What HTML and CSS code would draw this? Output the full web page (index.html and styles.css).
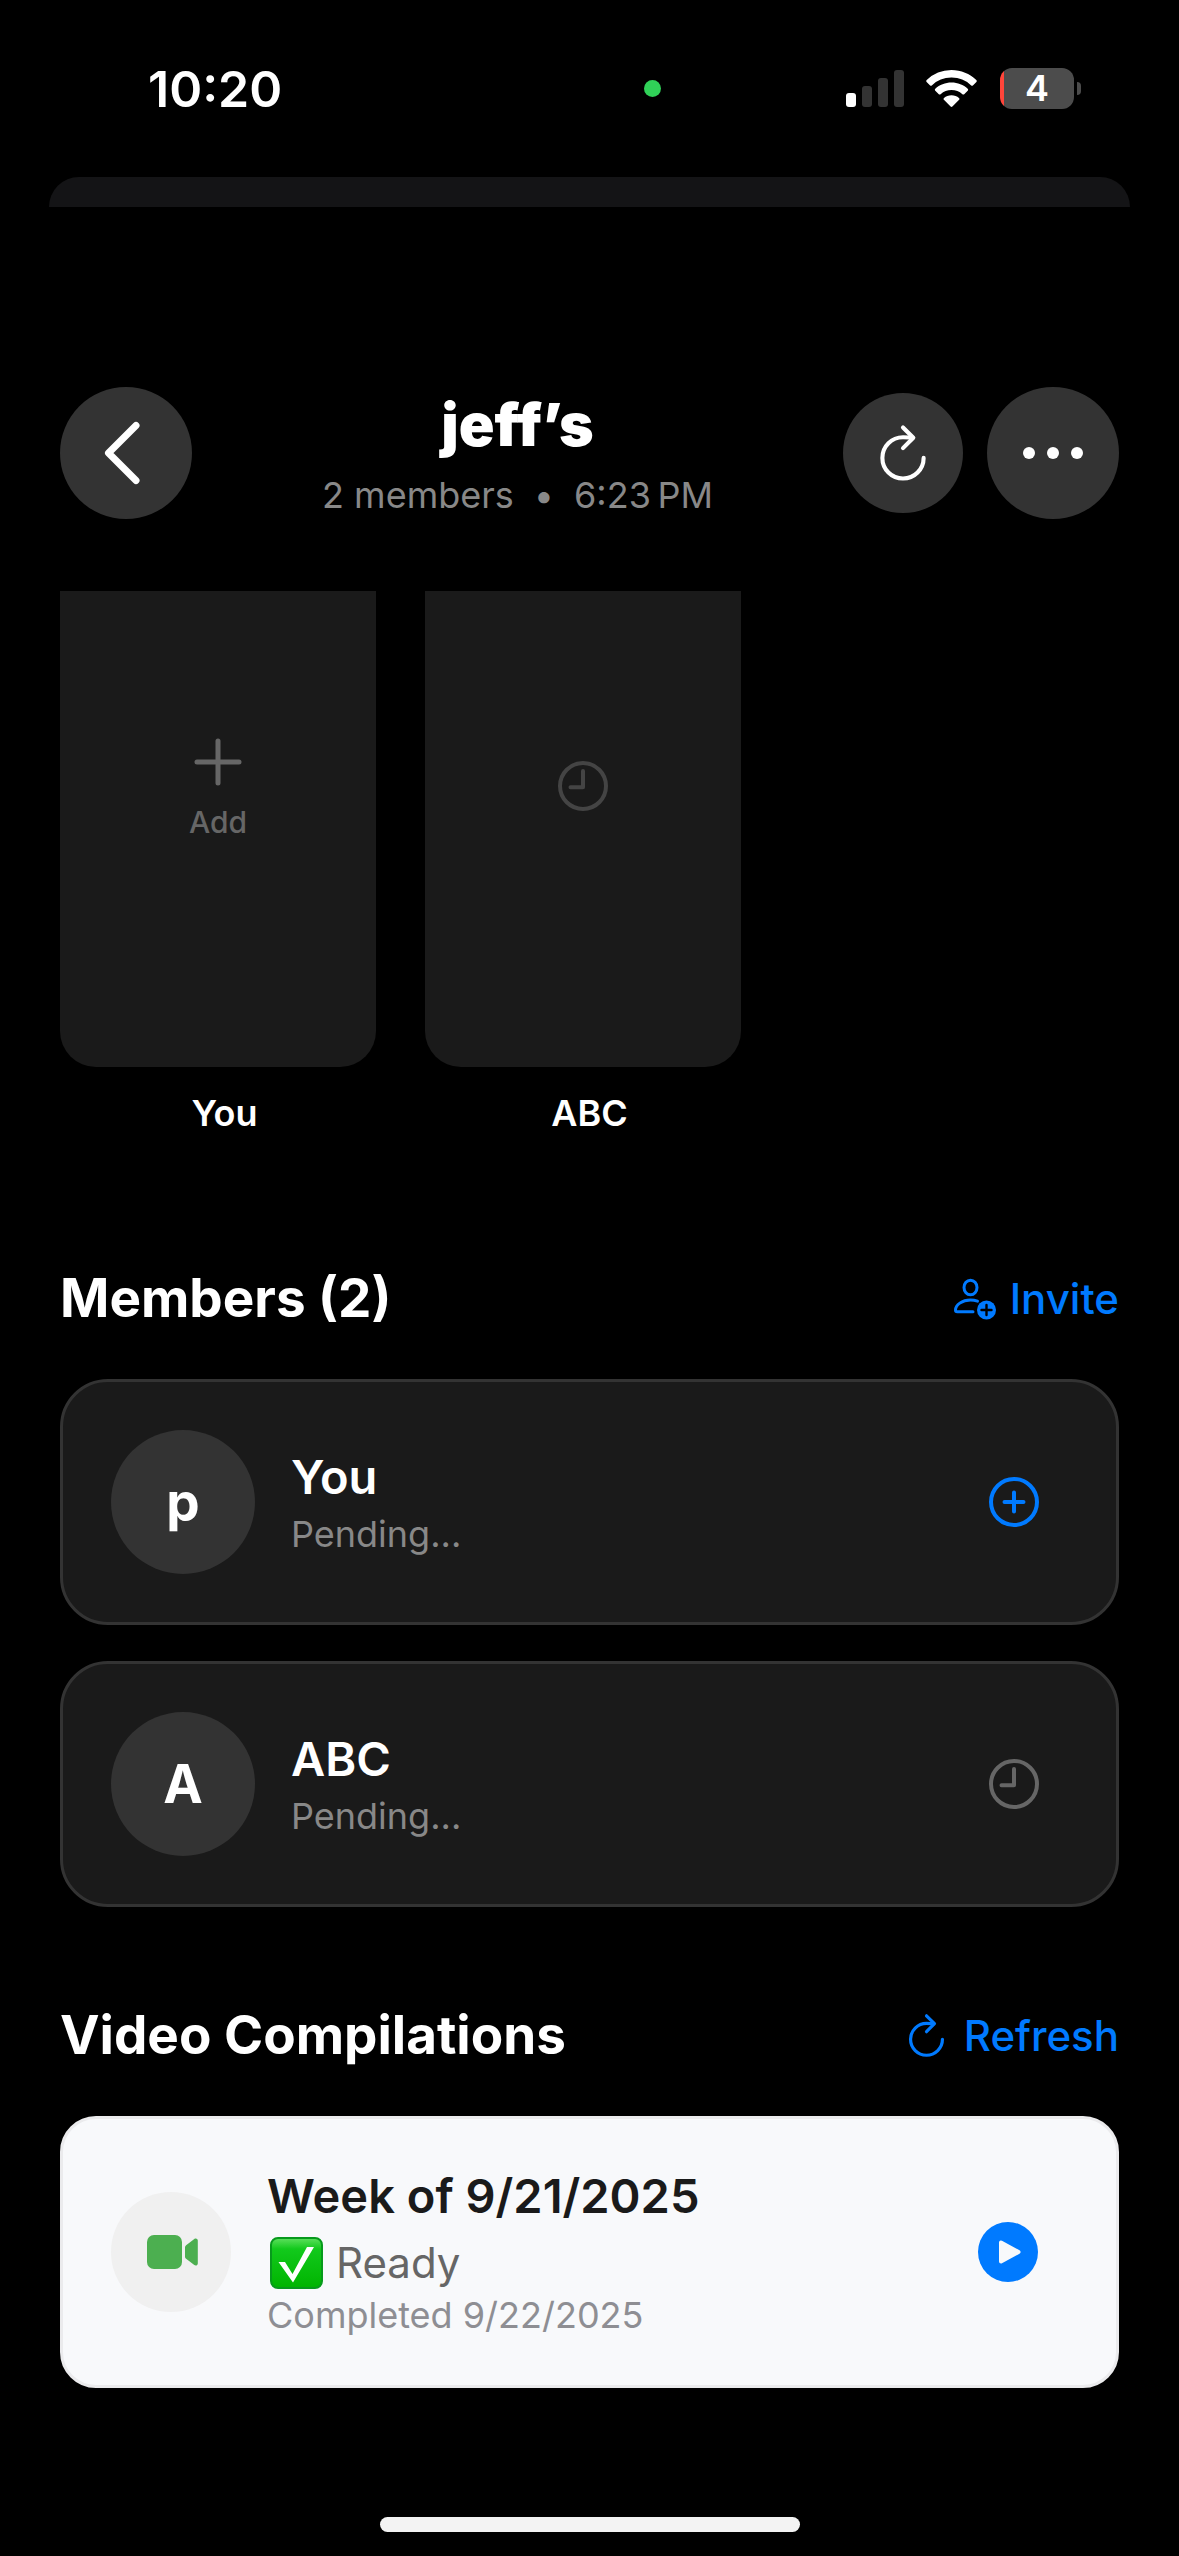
FILE: index.html
```html
<!DOCTYPE html>
<html lang="en">
<head>
<meta charset="utf-8">
<meta name="viewport" content="width=device-width, initial-scale=1">
<title>jeff’s</title>
<link rel="stylesheet" href="styles.css">
</head>
<body>
<svg class="sprite" aria-hidden="true">
  <symbol id="refresh" viewBox="0 0 512 512">
    <path d="M320 146s24.360-12-64-12a160 160 0 1 0 160 160" fill="none" stroke="currentColor" stroke-width="32" stroke-linecap="round"/>
    <path d="M256 58l80 80-80 80" fill="none" stroke="currentColor" stroke-width="32" stroke-linecap="round" stroke-linejoin="round"/>
  </symbol>
  <symbol id="clock" viewBox="0 0 60 60">
    <g fill="none" stroke="currentColor" stroke-width="4" stroke-linecap="round" stroke-linejoin="round">
      <circle cx="30" cy="30" r="23"/>
      <path d="M30 15v16.300H17.500"/>
    </g>
  </symbol>
</svg>

<div class="screen">
  <div class="status">
    <time class="clock">10:20</time>
    <span class="camera-dot"></span>
    <svg class="signal" viewBox="0 0 58 37" aria-label="Signal">
      <rect x="0" y="23" width="10" height="14" rx="3" fill="#fff"/>
      <rect x="16" y="16" width="10" height="21" rx="3" fill="#333"/>
      <rect x="32" y="8" width="10" height="29" rx="3" fill="#333"/>
      <rect x="48" y="0" width="10" height="37" rx="3" fill="#333"/>
    </svg>
    <svg class="wifi" viewBox="0 0 51 37" aria-label="Wi-Fi">
      <path fill="#fff" d="M25.500 0C35 0 43.800 3.700 50.300 10c.6.600.6 1.300.1 1.900l-3.500 3.500c-.5.500-1.200.5-1.700 0A28.300 28.300 0 0 0 25.500 7.600 28.300 28.300 0 0 0 5.800 15.400c-.5.500-1.200.5-1.700 0L.6 11.900c-.5-.6-.5-1.300.1-1.900A35.600 35.600 0 0 1 25.500 0z"/>
      <path fill="#fff" d="M25.500 12.600c6.200 0 11.900 2.300 16.200 6.200.6.600.6 1.300 0 1.900l-3.500 3.500c-.5.500-1.200.5-1.800.1a16.200 16.200 0 0 0-21.800 0c-.6.400-1.300.4-1.800-.1l-3.500-3.500c-.6-.6-.6-1.300 0-1.900 4.300-3.900 10-6.200 16.200-6.200z"/>
      <path fill="#fff" d="M25.500 25.200c2.900 0 5.500 1 7.500 2.700.6.500.6 1.300.1 1.800l-6.700 6.800c-.5.500-1.300.5-1.800 0l-6.700-6.800c-.5-.5-.5-1.300.1-1.800 2-1.700 4.600-2.700 7.500-2.700z"/>
    </svg>
    <span class="battery">4</span>
    <span class="battery-tip"></span>
  </div>

  <div class="sheet-edge"></div>

  <header class="header">
    <button class="round large" aria-label="Back">
      <svg class="icon-large" viewBox="0 0 72 72"><path d="M46 8.500L18.500 36 46 63.500" fill="none" stroke="#fff" stroke-width="7" stroke-linecap="round" stroke-linejoin="round"/></svg>
    </button>
    <div class="heading">
      <h1 class="title">jeff’s</h1>
      <p class="subtitle"><span>2 members</span><span>•</span><span>6:23&#8239;PM</span></p>
    </div>
    <button class="round" aria-label="Refresh"><svg class="icon-refresh"><use href="#refresh"/></svg></button>
    <button class="round large" aria-label="More">
      <svg class="icon-large" viewBox="0 0 72 72" fill="#fff"><circle cx="12" cy="36" r="6"/><circle cx="36" cy="36" r="6"/><circle cx="60" cy="36" r="6"/></svg>
    </button>
  </header>

  <main class="content">
    <div class="stories">
      <div class="story">
        <button class="story-card add">
          <svg class="icon" viewBox="0 0 60 60"><path d="M30 9v42M9 30h42" fill="none" stroke="currentColor" stroke-width="5" stroke-linecap="round"/></svg>
          <span>Add</span>
        </button>
        <span class="story-name">You</span>
      </div>
      <div class="story">
        <div class="story-card waiting"><svg class="icon"><use href="#clock"/></svg></div>
        <span class="story-name">ABC</span>
      </div>
    </div>

    <section class="section">
      <div class="section-head">
        <h2 class="section-title">Members (2)</h2>
        <button class="link">
          <svg class="icon-invite" viewBox="0 0 48 48">
            <g fill="none" stroke="currentColor" stroke-width="3" stroke-linecap="round">
              <ellipse cx="20.500" cy="12.500" rx="6.500" ry="7.300"/>
              <path d="M27.500 26.200C25.300 25.400 23 25 20.500 25 12 25 5.500 30 5.500 35c0 1.300.5 1.800 1.800 1.800H23"/>
            </g>
            <circle cx="36.500" cy="35" r="9.500" fill="currentColor"/>
            <path d="M36.500 30v10M31.500 35h10" stroke="#000" stroke-width="2.400" stroke-linecap="round"/>
          </svg>
          Invite
        </button>
      </div>
      <div class="cards">
        <article class="card">
          <span class="avatar">p</span>
          <div class="card-text">
            <h3 class="name">You</h3>
            <p class="note">Pending...</p>
          </div>
          <button class="action" aria-label="Add yours">
            <svg class="icon" viewBox="0 0 60 60"><g fill="none" stroke="currentColor" stroke-width="4" stroke-linecap="round"><circle cx="30" cy="30" r="23"/><path d="M30 20.500v19M20.500 30h19"/></g></svg>
          </button>
        </article>
        <article class="card">
          <span class="avatar">A</span>
          <div class="card-text">
            <h3 class="name">ABC</h3>
            <p class="note">Pending...</p>
          </div>
          <span class="action muted"><svg class="icon"><use href="#clock"/></svg></span>
        </article>
      </div>
    </section>

    <section class="section">
      <div class="section-head">
        <h2 class="section-title">Video Compilations</h2>
        <button class="link"><svg class="icon-reload"><use href="#refresh"/></svg>Refresh</button>
      </div>
      <article class="card light">
        <span class="avatar video">
          <svg class="icon" viewBox="0 0 60 60" fill="#4caf50">
            <rect x="6" y="13" width="35" height="34" rx="7"/>
            <path d="M44 25.300c0-.9.400-1.600 1.100-2.100l8.200-6.300c1.500-1.100 3.500-.2 3.500 1.600v23c0 1.800-2 2.700-3.500 1.600l-8.200-6.300c-.7-.5-1.100-1.200-1.100-2.100z"/>
          </svg>
        </span>
        <div class="card-text">
          <h3 class="name">Week of 9/21/2025</h3>
          <p class="ready">
            <svg class="check" viewBox="0 0 57 52" role="img" aria-label="Done">
              <defs><linearGradient id="green" x1="0" y1="0" x2="0" y2="1"><stop offset="0" stop-color="#5fe05f"/><stop offset=".22" stop-color="#12c91c"/><stop offset="1" stop-color="#00b400"/></linearGradient></defs>
              <rect x="4" y="1" width="51" height="50" rx="7" fill="url(#green)" stroke="#079a1c" stroke-width="2"/>
              <path d="M11.500 25h6.500l7.500 12L40 10h7L26 45.500z" fill="#fff"/>
            </svg>
            Ready
          </p>
          <p class="note">Completed 9/22/2025</p>
        </div>
        <button class="action" aria-label="Play">
          <svg class="icon-large" viewBox="0 0 72 72"><circle cx="36" cy="36" r="30" fill="#007aff"/><path d="M29 26.500v19l17.500-9.500z" fill="#f8f9fb" stroke="#f8f9fb" stroke-width="4" stroke-linejoin="round"/></svg>
        </button>
      </article>
    </section>
  </main>

  <div class="home-bar"></div>
</div>
</body>
</html>
```

FILE: styles.css
```css
* { box-sizing: border-box; margin: 0; padding: 0; }

body {
  background: #000;
  color: #fff;
  font-family: Inter, "Liberation Sans", sans-serif;
  font-size: 36px;
  line-height: 44px;
}

button {
  border: 0;
  background: none;
  color: inherit;
  font: inherit;
  cursor: pointer;
}

svg { display: block; flex: none; }
.sprite { position: absolute; width: 0; height: 0; }
.icon { width: 60px; height: 60px; }
.icon-large { width: 72px; height: 72px; }
.icon-refresh { width: 66px; height: 66px; }
.icon-reload { width: 51px; height: 51px; }
.icon-invite { width: 48px; height: 48px; }

.screen {
  display: flex;
  flex-direction: column;
  min-height: 100vh;
}

/* Status bar */
.status {
  display: flex;
  align-items: center;
  height: 177px;
  padding: 0 98px 0 148px;
}
.clock { font-size: 50px; font-weight: 600; }
.camera-dot {
  width: 17px;
  height: 17px;
  margin: 0 185px 0 auto;
  border-radius: 50%;
  background: #30d158;
}
.signal { width: 58px; height: 37px; }
.wifi { width: 51px; height: 37px; margin: 0 23px 0 22px; }
.battery {
  width: 74px;
  height: 41px;
  border-radius: 12px;
  background: linear-gradient(90deg, #ff453a 4px, #4c4c4c 4px);
  font-weight: 600;
  line-height: 41px;
  text-align: center;
}
.battery-tip {
  width: 4px;
  height: 13px;
  margin-left: 3px;
  border-radius: 0 4px 4px 0;
  background: #4c4c4c;
}

.sheet-edge {
  height: 30px;
  margin: 0 49px;
  border-radius: 30px 30px 0 0;
  background: #141416;
}

/* Header */
.header {
  display: flex;
  align-items: center;
  gap: 24px;
  padding: 180px 60px 72px;
}
.round {
  display: grid;
  place-items: center;
  flex: none;
  width: 120px;
  height: 120px;
  border-radius: 50%;
  background: #333;
}
.round.large { width: 132px; height: 132px; }
.heading {
  display: flex;
  flex: 1;
  flex-direction: column;
  align-items: center;
  gap: 12px;
}
.title { font-size: 59px; font-weight: 900; line-height: 72px; }
.subtitle { display: flex; gap: 20px; color: #888; }

.content { overflow: hidden; padding: 0 60px; }
.stories {
  display: grid;
  grid-template-columns: repeat(3, 1fr);
  gap: 36px;
  margin-top: -86px;
  padding-bottom: 35px;
}
.story { display: flex; flex-direction: column; gap: 24px; }
.story-card {
  display: flex;
  flex-direction: column;
  align-items: center;
  justify-content: center;
  gap: 12px;
  width: 316px;
  height: 562px;
  border-radius: 36px;
  background: #1a1a1a;
}
.add { color: #666; font-size: 30px; line-height: 36px; font-weight: 500; }
.waiting { color: #444; }
.story-name { font-weight: 600; text-align: center; }

/* Sections */
.section { padding-top: 96px; }
.section-head {
  display: flex;
  align-items: center;
  justify-content: space-between;
  height: 65px;
  margin-bottom: 48px;
}
.section-title { font-size: 53px; font-weight: 700; line-height: 65px; }
.link {
  display: flex;
  align-items: center;
  gap: 12px;
  color: #007aff;
  font-size: 42px;
  font-weight: 500;
  line-height: 52px;
}
.cards { display: flex; flex-direction: column; gap: 36px; }
.card {
  display: flex;
  align-items: center;
  gap: 36px;
  padding: 48px;
  border: 3px solid #333;
  border-radius: 48px;
  background: #1a1a1a;
}
.avatar {
  display: grid;
  place-items: center;
  flex: none;
  width: 144px;
  height: 144px;
  border-radius: 50%;
  background: #333;
  font-size: 53px;
  font-weight: 700;
}
.card-text { flex: 1; }
.name { margin-bottom: 6px; font-size: 47px; font-weight: 600; line-height: 58px; }
.note { color: #888; }
.action { padding: 24px; color: #007aff; }
.action.muted { color: #666; }

.card.light {
  border-color: #ebebed;
  border-radius: 36px;
  background: #f8f9fb;
  color: #1a1a1a;
}
.avatar.video { width: 120px; height: 120px; background: #f0f0f0; }
.light .name { margin-bottom: 12px; }
.light .note { color: #8e8e93; }
.ready {
  display: flex;
  align-items: center;
  gap: 12px;
  margin-bottom: 4px;
  color: #666;
  font-size: 42px;
  line-height: 52px;
}
.check { width: 57px; height: 52px; }

.home-bar {
  width: 420px;
  height: 15px;
  margin: auto auto 24px;
  border-radius: 8px;
  background: #f3f3f3;
}
```
